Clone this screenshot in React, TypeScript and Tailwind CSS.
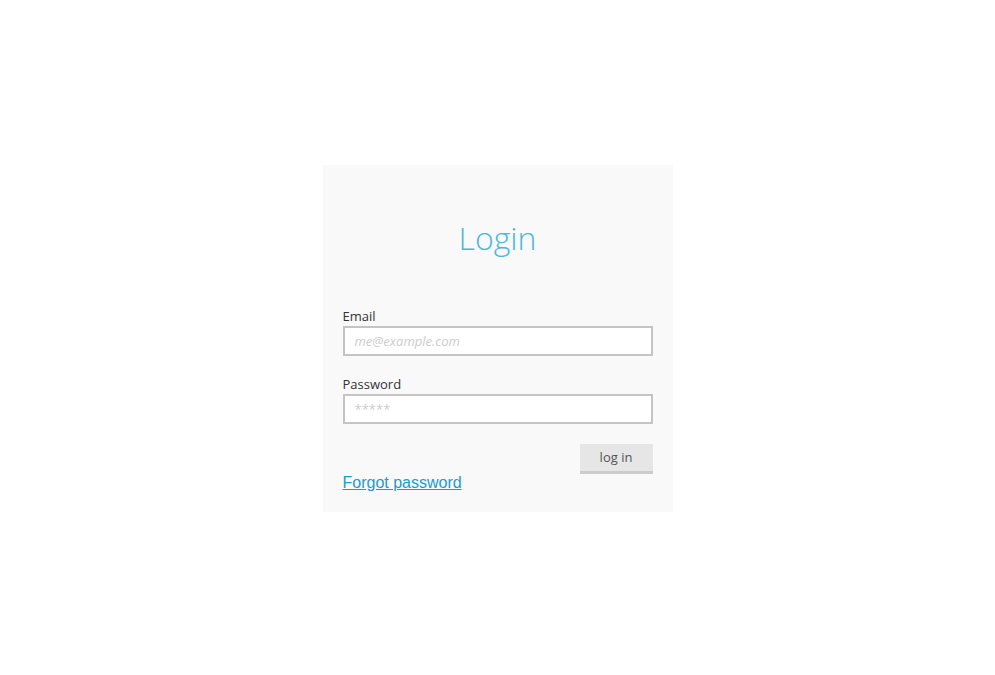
export default function App() {
  return (
    <div
      className="flex min-h-screen items-center justify-center bg-white pt-[2px]"
      style={{ fontFamily: '"Open Sans", sans-serif' }}
    >
      <div className="w-[350px] bg-[#f9f9f9] p-[20px]">
        {/* Title */}
        <h1 className="mb-[50px] mt-[34px] text-center text-[32px] font-light leading-[38px] text-[#4ab8dc]">
          Login
        </h1>

        <form onSubmit={(e) => e.preventDefault()}>
          <label className="mb-[1px] block text-[13px] leading-[18px] text-[#333]">Email</label>
          <input
            type="email"
            placeholder="me@example.com"
            className="block h-[30px] w-full border-2 border-[#c4c4c4] bg-white px-[10px] text-[13px] text-[#333] outline-none placeholder:italic placeholder:text-[#ccc]"
          />

          <label className="mb-[1px] mt-[19px] block text-[13px] leading-[18px] text-[#333]">Password</label>
          <input
            type="password"
            placeholder="*****"
            className="block h-[30px] w-full border-2 border-[#c4c4c4] bg-white px-[10px] text-[13px] text-[#333] outline-none placeholder:text-[#ccc]"
          />

          <div className="mt-[20px] flex justify-end">
            <button
              type="submit"
              className="h-[30px] w-[73px] border-b-[3px] border-[#ccc] bg-[#e6e6e6] text-[13px] text-[#555]"
            >
              log in
            </button>
          </div>
        </form>

        <a
          href="#"
          className="block w-fit text-[16px] leading-[18px] text-[#1a9bd0] underline"
          style={{ fontFamily: '"Liberation Sans", Arial, sans-serif' }}
        >
          Forgot password
        </a>
      </div>
    </div>
  );
}
